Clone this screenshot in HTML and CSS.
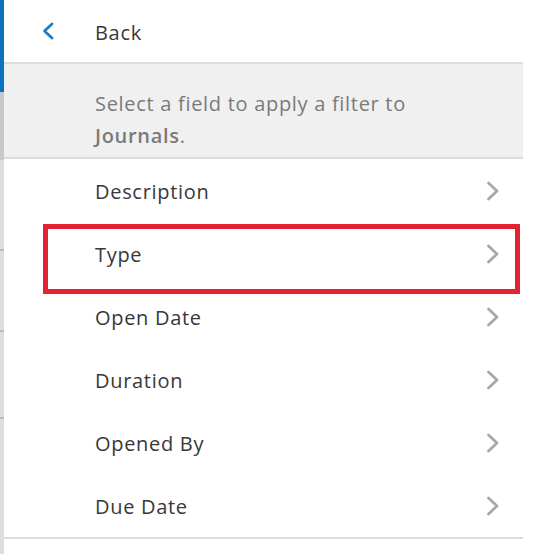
FILE: index.html
```html
<!DOCTYPE html>
<html>
<head>
<meta charset="utf-8">
<link rel="stylesheet" href="styles.css">
</head>
<body>
<div class="screen">
  <div class="strip">
    <div class="strip-blue"></div>
    <div class="strip-gray"></div>
    <div class="strip-light">
      <div class="strip-line l1"></div>
      <div class="strip-line l2"></div>
      <div class="strip-line l3"></div>
    </div>
  </div>
  <div class="panel">
    <div class="header">
      <svg class="back-icon" width="14" height="18" viewBox="0 0 14 18"><path d="M11 2 L3.5 9 L11 16" fill="none" stroke="#1a7cc4" stroke-width="2.8" stroke-linecap="round" stroke-linejoin="round"/></svg>
      <span class="back-text">Back</span>
    </div>
    <div class="info">Select a field to apply a filter to<br><b>Journals</b>.</div>
    <div class="list">
      <div class="item"><span class="label">Description</span><svg class="chev" width="14" height="20" viewBox="0 0 14 20"><path d="M2.5 2 L11 10 L2.5 18" fill="none" stroke="#a8a8a8" stroke-width="2.8" stroke-linecap="round" stroke-linejoin="round"/></svg></div>
      <div class="item"><span class="label">Type</span><svg class="chev" width="14" height="20" viewBox="0 0 14 20"><path d="M2.5 2 L11 10 L2.5 18" fill="none" stroke="#a8a8a8" stroke-width="2.8" stroke-linecap="round" stroke-linejoin="round"/></svg></div>
      <div class="item"><span class="label">Open Date</span><svg class="chev" width="14" height="20" viewBox="0 0 14 20"><path d="M2.5 2 L11 10 L2.5 18" fill="none" stroke="#a8a8a8" stroke-width="2.8" stroke-linecap="round" stroke-linejoin="round"/></svg></div>
      <div class="item"><span class="label">Duration</span><svg class="chev" width="14" height="20" viewBox="0 0 14 20"><path d="M2.5 2 L11 10 L2.5 18" fill="none" stroke="#a8a8a8" stroke-width="2.8" stroke-linecap="round" stroke-linejoin="round"/></svg></div>
      <div class="item"><span class="label">Opened By</span><svg class="chev" width="14" height="20" viewBox="0 0 14 20"><path d="M2.5 2 L11 10 L2.5 18" fill="none" stroke="#a8a8a8" stroke-width="2.8" stroke-linecap="round" stroke-linejoin="round"/></svg></div>
      <div class="item"><span class="label">Due Date</span><svg class="chev" width="14" height="20" viewBox="0 0 14 20"><path d="M2.5 2 L11 10 L2.5 18" fill="none" stroke="#a8a8a8" stroke-width="2.8" stroke-linecap="round" stroke-linejoin="round"/></svg></div>
    </div>
  </div>
  <div class="highlight"></div>
</div>
</body>
</html>
```
FILE: styles.css
```css
html, body {
  margin: 0;
  padding: 0;
  background: #ffffff;
}
.screen {
  position: relative;
  display: flex;
  width: 533px;
  height: 554px;
  overflow: hidden;
  font-family: "Open Sans", "Noto Sans", sans-serif;
  letter-spacing: 0.7px;
}
.strip {
  width: 4px;
  display: flex;
  flex-direction: column;
  flex-shrink: 0;
}
.strip-blue {
  height: 92px;
  background: #0b72bd;
}
.strip-gray {
  height: 68px;
  background: #c8c8c8;
}
.strip-light {
  flex: 1;
  background: #dedede;
  display: flex;
  flex-direction: column;
}
.strip-line {
  height: 2px;
  background: #bdbdbd;
}
.l1 { margin-top: 89px; }
.l2 { margin-top: 79px; }
.l3 { margin-top: 85px; }
.panel {
  width: 519px;
  display: flex;
  flex-direction: column;
  flex-shrink: 0;
}
.header {
  height: 62px;
  border-bottom: 2px solid #dcdcdc;
  display: flex;
  align-items: center;
  padding-left: 37px;
  color: #383838;
  font-size: 20px;
}
.back-icon {
  margin-right: 40px;
  margin-top: -1px;
}
.back-text {
  padding-top: 2px;
}
.info {
  background: #f0f0f0;
  border-bottom: 2px solid #dcdcdc;
  padding: 24px 0 5px 91px;
  line-height: 32px;
  font-size: 20px;
  color: #7a7a7a;
}
.info b {
  font-weight: 600;
}
.list {
  border-bottom: 2px solid #dcdcdc;
}
.item {
  height: 63px;
  display: flex;
  align-items: center;
  justify-content: space-between;
  padding: 0 23px 0 91px;
  font-size: 20px;
  color: #383838;
}
.label {
  padding-top: 2px;
}
.chev {
  margin-top: 1px;
}
.highlight {
  position: absolute;
  left: 43px;
  top: 224px;
  width: 467px;
  height: 60px;
  border: 5px solid #e3232f;
}
```
